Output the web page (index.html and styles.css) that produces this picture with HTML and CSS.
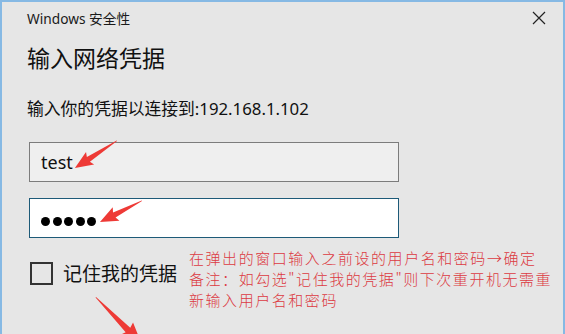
FILE: index.html
```html
<!DOCTYPE html>
<html lang="zh-CN">
<head>
<meta charset="utf-8">
<link rel="stylesheet" href="styles.css">
</head>
<body>
<div class="window">
  <div class="titlebar">
    <span class="title">Windows 安全性</span>
    <svg class="close" width="14" height="14" viewBox="0 0 14 14"><path d="M1 1 L13 13 M13 1 L1 13" stroke="#222" stroke-width="1.2" fill="none"/></svg>
  </div>
  <h1 class="heading">输入网络凭据</h1>
  <p class="subtitle">输入你的凭据以连接到:192.168.1.102</p>
  <div class="field user">test</div>
  <div class="field pass">
    <span class="dot"></span><span class="dot"></span><span class="dot"></span><span class="dot"></span><span class="dot"></span>
  </div>
  <label class="remember">
    <span class="checkbox"></span>
    <span class="remember-text">记住我的凭据</span>
  </label>

  <div class="note">
    <div class="note-line">在弹出的窗口输入之前设的用户名和密码→确定</div>
    <div class="note-line">备注：如勾选"记住我的凭据"则下次重开机无需重</div>
    <div class="note-line">新输入用户名和密码</div>
  </div>

  <svg class="arrows" width="565" height="334" viewBox="0 0 565 334">
    <g fill="#ee3a36">
      <g transform="translate(117 141) rotate(147.3)">
        <polygon points="0,0 34,-2.8 32,-7.5 50,0 32,7.5 34,2.8 0,0.6"/>
      </g>
      <g transform="translate(142 201) rotate(153.4)">
        <polygon points="0,0 31,-2.8 29,-7.5 47,0 29,7.5 31,2.8 0,0.6"/>
      </g>
      <g transform="translate(96 297) rotate(46)">
        <polygon points="0,0 46,-3.2 44,-9 66,0 44,9 46,3.2 0,0.6"/>
      </g>
    </g>
  </svg>
</div>
</body>
</html>
```
FILE: styles.css
```css
html, body {
  margin: 0;
  padding: 0;
}
body {
  width: 565px;
  height: 334px;
  overflow: hidden;
  background: #e6e6e6;
  font-family: "Noto Sans", "Noto Sans CJK SC", sans-serif;
  color: #111;
}
.window {
  position: relative;
  box-sizing: border-box;
  width: 565px;
  height: 334px;
  border: 2px solid #86b9e4;
  border-bottom: none;
  background: #e6e6e6;
  padding: 0 0 0 25px;
}
.titlebar {
  display: flex;
  align-items: center;
  justify-content: space-between;
  height: 34px;
  padding-right: 17px;
}
.title {
  font-size: 13.7px;
  color: #1a1a1a;
  margin-top: -3px;
}
.close {
  margin-top: -2px;
}
.heading {
  margin: 4px 0 0 0;
  font-family: "Noto Sans CJK SC", sans-serif;
  font-weight: 400;
  font-size: 23px;
  line-height: 34px;
  color: #111;
}
.subtitle {
  margin: 24px 0 0 0;
  font-family: "Noto Sans", "Noto Sans CJK SC", sans-serif;
  font-size: 16.8px;
  line-height: 22px;
  color: #111;
}
.field {
  box-sizing: border-box;
  width: 370px;
  height: 40px;
  margin-left: 2px;
  display: flex;
  align-items: center;
  padding-left: 11px;
}
.user {
  margin-top: 22px;
  background: #efefef;
  border: 1px solid #7c7c7c;
  font-size: 18px;
  color: #111;
}
.pass {
  margin-top: 16px;
  background: #ffffff;
  border: 1px solid #1d5a78;
  gap: 2.5px;
  padding-top: 6px;
}
.dot {
  width: 9px;
  height: 9px;
  border-radius: 50%;
  background: #000;
}
.remember {
  display: flex;
  align-items: center;
  gap: 10px;
  margin: 23px 0 0 3px;
}
.checkbox {
  box-sizing: border-box;
  width: 23px;
  height: 23px;
  border: 2px solid #333;
  background: transparent;
}
.remember-text {
  font-family: "Noto Sans CJK SC", sans-serif;
  font-size: 19px;
  line-height: 24px;
  color: #111;
}
.note {
  position: absolute;
  left: 187px;
  top: 245px;
  font-family: "Noto Sans CJK SC", sans-serif;
  font-size: 15px;
  line-height: 21px;
  letter-spacing: 1.55px;
  color: #dc3a42;
  font-weight: 300;
}
.note-line {
  white-space: nowrap;
}
.arrows {
  position: absolute;
  left: -2px;
  top: -2px;
  pointer-events: none;
}
```
